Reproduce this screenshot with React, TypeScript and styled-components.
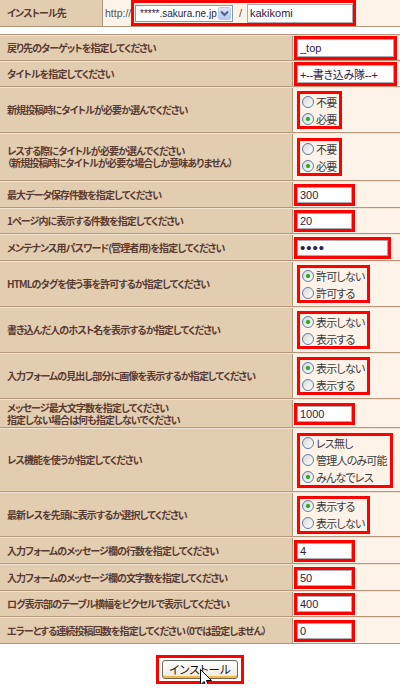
import React from 'react';
import styled, { createGlobalStyle } from 'styled-components';

const GlobalStyle = createGlobalStyle`
  html, body { margin: 0; padding: 0; background: #ffffff; }
  body { font-family: "Noto Sans CJK JP", "Liberation Sans", sans-serif; }
`;

type Row =
  | { label: string[]; h: number; kind: 'text'; value: string; w: number; tall?: boolean; password?: boolean }
  | { label: string[]; h: number; kind: 'radio'; options: string[]; checked: number };

const rows: Row[] = [
  { label: ['戻り先のターゲットを指定してください'], h: 26, kind: 'text', value: '_top', w: 103, tall: true },
  { label: ['タイトルを指定してください'], h: 26, kind: 'text', value: '+--書き込み隊--+', w: 103, tall: true },
  { label: ['新規投稿時にタイトルが必要か選んでください'], h: 46, kind: 'radio', options: ['不要', '必要'], checked: 1 },
  {
    label: ['レスする際にタイトルが必要か選んでください', '（新規投稿時にタイトルが必要な場合しか意味ありません）'],
    h: 48, kind: 'radio', options: ['不要', '必要'], checked: 1,
  },
  { label: ['最大データ保存件数を指定してください'], h: 27, kind: 'text', value: '300', w: 61 },
  { label: ['1ページ内に表示する件数を指定してください'], h: 26, kind: 'text', value: '20', w: 61 },
  { label: ['メンテナンス用パスワード(管理者用)を指定してください'], h: 27, kind: 'text', value: 'abcd', w: 97, password: true },
  { label: ['HTMLのタグを使う事を許可するか指定してください'], h: 46, kind: 'radio', options: ['許可しない', '許可する'], checked: 0 },
  { label: ['書き込んだ人のホスト名を表示するか指定してください'], h: 46, kind: 'radio', options: ['表示しない', '表示する'], checked: 0 },
  { label: ['入力フォームの見出し部分に画像を表示するか指定してください'], h: 46, kind: 'radio', options: ['表示しない', '表示する'], checked: 0 },
  {
    label: ['メッセージ最大文字数を指定してください', '指定しない場合は何も指定しないでください'],
    h: 29, kind: 'text', value: '1000', w: 61,
  },
  { label: ['レス機能を使うか指定してください'], h: 64, kind: 'radio', options: ['レス無し', '管理人のみ可能', 'みんなでレス'], checked: 2 },
  { label: ['最新レスを先頭に表示するか選択してください'], h: 45, kind: 'radio', options: ['表示する', '表示しない'], checked: 0 },
  { label: ['入力フォームのメッセージ欄の行数を指定してください'], h: 27, kind: 'text', value: '4', w: 61 },
  { label: ['入力フォームのメッセージ欄の文字数を指定してください'], h: 27, kind: 'text', value: '50', w: 61 },
  { label: ['ログ表示部のテーブル横幅をピクセルで表示してください'], h: 26, kind: 'text', value: '400', w: 61 },
  { label: ['エラーとする連続投稿回数を指定してください（0では設定しません）'], h: 27, kind: 'text', value: '0', w: 61 },
];

const hasWide = (s: string) => /[^\x00-\x7f]/.test(s);

const App: React.FC = () => {
  return (
    <Page>
      <GlobalStyle />
      <TopTable>
        <LabelCell>
          <LabelText>インストール先</LabelText>
        </LabelCell>
        <ValueCell>
          <Http>http://</Http>
          <TopMark>
            <Select>
              <SelectText>*****.sakura.ne.jp</SelectText>
              <SelectButton>
                <svg width="9" height="7" viewBox="0 0 9 7">
                  <path d="M1 1.5 L4.5 5 L8 1.5" fill="none" stroke="#4d6185" strokeWidth="2" />
                </svg>
              </SelectButton>
            </Select>
            <Slash>/</Slash>
            <DirInput readOnly value="kakikomi" />
          </TopMark>
        </ValueCell>
      </TopTable>

      <MainTable>
        {rows.map((row, i) => (
          <FormRow key={i} $h={row.h}>
            <LabelCell>
              <LabelText>
                {row.label.map((line, j) => (
                  <div key={j}>{line}</div>
                ))}
              </LabelText>
            </LabelCell>
            <ValueCell>
              {row.kind === 'text' ? (
                <TextMark $w={row.w} $tall={!!row.tall}>
                  <TextInput
                    readOnly
                    type={row.password ? 'password' : 'text'}
                    $password={!!row.password}
                    $wide={hasWide(row.value)}
                    value={row.value}
                  />
                </TextMark>
              ) : (
                <RadioMark>
                  {row.options.map((opt, k) => (
                    <RadioItem key={k}>
                      <RadioDot $on={k === row.checked} />
                      {opt}
                    </RadioItem>
                  ))}
                </RadioMark>
              )}
            </ValueCell>
          </FormRow>
        ))}
      </MainTable>

      <ButtonArea>
        <ButtonMark>
          <InstallButton>インストール</InstallButton>
          <Cursor width="13" height="20" viewBox="0 0 13 20">
            <path d="M0.5 0.5 L0.5 16 L4 12.5 L6.5 18.5 L9 17.5 L6.5 11.5 L11.5 11.5 Z" fill="#fff" stroke="#000" strokeWidth="1" />
          </Cursor>
        </ButtonMark>
      </ButtonArea>
    </Page>
  );
};

const Page = styled.div`
  width: 400px;
  overflow: hidden;
`;

const TopTable = styled.div`
  display: grid;
  grid-template-columns: 103px 1fr;
  height: 27px;
  box-sizing: border-box;
  border-bottom: 1px solid #b4967b;
`;

const MainTable = styled.div`
  margin-top: 7px;
  border-top: 1px solid #b4967b;
`;

const FormRow = styled.div<{ $h: number }>`
  display: grid;
  grid-template-columns: 293px 1fr;
  box-sizing: border-box;
  min-height: ${(p) => p.$h}px;
  border-top: 1px solid #f2e4d2;
  border-bottom: 1px solid #b4967b;
`;

const LabelCell = styled.div`
  box-sizing: border-box;
  background: #e3cdb1;
  border-right: 1px solid #b4967b;
  display: flex;
  align-items: center;
  padding-left: 7px;
  overflow: hidden;
`;

const LabelText = styled.div`
  font-size: 10px;
  line-height: 12px;
  font-weight: bold;
  letter-spacing: -0.9px;
  color: #5a3b32;
  font-feature-settings: "palt";
  white-space: nowrap;
`;

const ValueCell = styled.div`
  background: #fdf3e9;
  border-left: 1px solid #fbf6ef;
  display: flex;
  align-items: center;
  min-width: 0;
`;

const Http = styled.span`
  width: 26px;
  flex: none;
  font-family: "Liberation Sans", Arial, sans-serif;
  font-size: 10.5px;
  color: #555;
  padding-left: 1px;
  white-space: nowrap;
`;

const TopMark = styled.div`
  display: flex;
  align-items: center;
  box-sizing: border-box;
  height: 26px;
  width: 225px;
  flex: none;
  border: 3px solid #ff0000;
  padding-left: 1px;
  background: #fdf3e9;
`;

const Select = styled.div`
  display: flex;
  align-items: stretch;
  box-sizing: border-box;
  width: 100px;
  height: 17px;
  background: #fff;
  border: 1px solid #7f9db9;
`;

const SelectText = styled.span`
  flex: 1;
  font-family: "Liberation Sans", Arial, sans-serif;
  font-size: 10px;
  line-height: 15px;
  color: #2e2148;
  padding-left: 4px;
  white-space: nowrap;
  overflow: hidden;
`;

const SelectButton = styled.span`
  width: 13px;
  margin: 1px;
  box-sizing: border-box;
  border: 1px solid #b9c9ef;
  border-radius: 2px;
  background: linear-gradient(#dbe4fb, #b7c9f4);
  display: flex;
  align-items: center;
  justify-content: center;
`;

const Slash = styled.span`
  font-family: "Liberation Sans", Arial, sans-serif;
  font-size: 11px;
  color: #555;
  margin: 0 5px 0 6px;
`;

const DirInput = styled.input`
  box-sizing: border-box;
  width: 106px;
  height: 19px;
  border: 1px solid #a5acb2;
  padding: 0 2px;
  font-family: "Liberation Sans", Arial, sans-serif;
  font-size: 11px;
  color: #2e2148;
  outline: none;
`;

const TextMark = styled.div<{ $w: number; $tall: boolean }>`
  box-sizing: border-box;
  width: ${(p) => p.$w}px;
  height: ${(p) => (p.$tall ? 24 : 22)}px;
  border: 3px solid #ff0000;
  display: flex;
`;

const TextInput = styled.input<{ $password: boolean; $wide: boolean }>`
  box-sizing: border-box;
  flex: 1;
  min-width: 0;
  border: 1px solid #a5acb2;
  padding: 0 2px;
  margin: 0;
  font-family: "Liberation Sans", "Noto Sans CJK JP", sans-serif;
  font-size: ${(p) => (p.$password ? '15px' : '11px')};
  letter-spacing: ${(p) => (p.$password ? '1px' : p.$wide ? '-0.3px' : '0')};
  font-feature-settings: "palt";
  color: #2e2148;
  background: #fff;
  outline: none;
`;

const RadioMark = styled.div`
  margin-left: 3px;
  border: 3px solid #ff0000;
  padding: 1px 3px 1px 2px;
  display: flex;
  flex-direction: column;
  gap: 4px;
`;

const RadioItem = styled.div`
  display: flex;
  align-items: center;
  height: 13px;
  gap: 2px;
  font-size: 11px;
  letter-spacing: -0.8px;
  color: #3c3c3c;
  font-feature-settings: "palt";
  white-space: nowrap;
`;

const RadioDot = styled.span<{ $on: boolean }>`
  position: relative;
  flex: none;
  box-sizing: border-box;
  width: 12px;
  height: 12px;
  border-radius: 50%;
  border: 1px solid #5c7ea5;
  background: linear-gradient(135deg, #d8d8d2, #ffffff);
  &::after {
    content: '';
    display: ${(p) => (p.$on ? 'block' : 'none')};
    position: absolute;
    left: 3px;
    top: 3px;
    width: 4px;
    height: 4px;
    border-radius: 50%;
    background: #2aa52a;
    box-shadow: 0 0 1px #6cd16c;
  }
`;

const ButtonArea = styled.div`
  display: flex;
  justify-content: center;
  padding-top: 11px;
`;

const ButtonMark = styled.div`
  position: relative;
  border: 3px solid #ff0000;
  padding: 2px 3px;
  display: flex;
`;

const InstallButton = styled.button`
  width: 76px;
  height: 19px;
  padding: 0;
  border: 1px solid #6f6a5e;
  border-radius: 3px;
  background: linear-gradient(#ffffff, #ece9de);
  box-shadow: inset 0 -2px 0 #f5b843, inset 0 1px 0 #fff3cf;
  font-family: "Noto Sans CJK JP", sans-serif;
  font-size: 11.5px;
  font-feature-settings: "palt";
  line-height: 17px;
  color: #111;
`;

const Cursor = styled.svg`
  position: absolute;
  left: 41px;
  top: 11px;
`;

export default App;
